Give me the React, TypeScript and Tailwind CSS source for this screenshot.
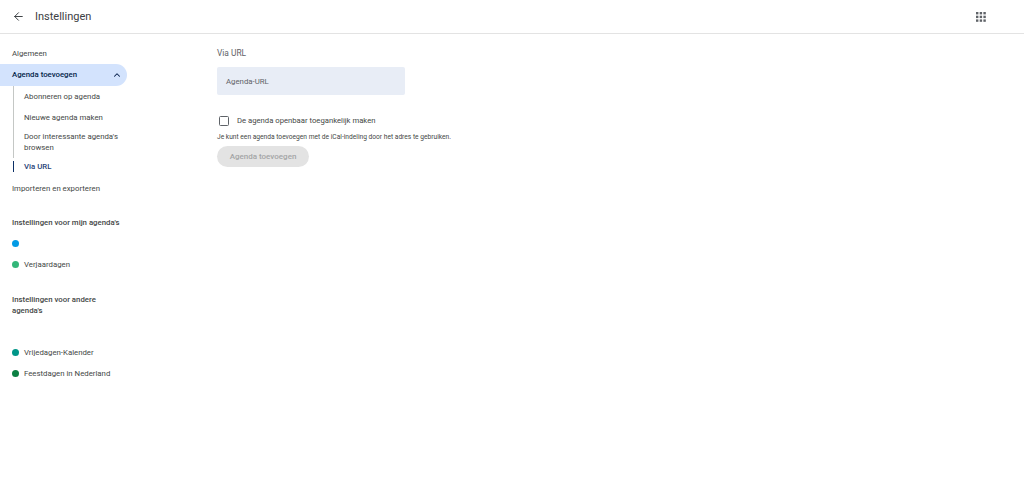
import React from "react";
import { ArrowLeft, ChevronUp } from "lucide-react";

const font = "font-['Roboto',sans-serif]";

const subItems = [
  { label: "Abonneren op agenda", h: "h-[21px] items-center" },
  { label: "Nieuwe agenda maken", h: "h-[21px] items-center" },
  { label: "Door interessante agenda's browsen", h: "h-[30px] items-start pt-[3px]" },
];

const CalendarRow = ({ dot, label }: { dot: string; label?: string }) => (
  <div className="flex h-[21px] items-center pl-3">
    <span className={`h-[7px] w-[7px] rounded-full ${dot}`} />
    <span className="ml-[5px] text-[7.8px] text-[#444746]">{label}</span>
  </div>
);

const Sidebar = () => (
  <aside className="w-[217px] shrink-0 pt-[9px]">
    <div className="flex h-[21px] items-center pl-3 text-[7.8px] text-[#444746]">Algemeen</div>
    <div className="flex h-[22px] w-[127px] items-center justify-between rounded-r-full bg-[#d3e3fd] pl-3 pr-[5px] text-[7.8px] font-medium text-[#041e49]">
      <span>Agenda toevoegen</span>
      <ChevronUp size={10} strokeWidth={2.5} className="text-[#041e49]" />
    </div>
    <div className="ml-[13px] w-[114px]">
      {subItems.map((item) => (
        <div
          key={item.label}
          className={`flex border-l border-[#c4c7c5] pl-[10px] text-[7.8px] leading-[11px] text-[#444746] ${item.h}`}
        >
          <span className="w-[102px]">{item.label}</span>
        </div>
      ))}
      <div className="mt-[3px] flex h-[11px] items-center border-l border-[#0b2f66] pl-[10px] text-[7.8px] font-medium text-[#1f3f77]">
        Via URL
      </div>
    </div>
    <div className="mt-[6px] flex h-[21px] items-center pl-3 text-[7.8px] text-[#444746]">
      Importeren en exporteren
    </div>
    <h2 className="mt-[18px] w-[125px] pl-3 text-[7.8px] font-medium leading-[11px] text-[#444746]">
      Instellingen voor mijn agenda's
    </h2>
    <div className="mt-[5px]">
      <CalendarRow dot="bg-[#039be5]" />
      <CalendarRow dot="bg-[#33b679]" label="Verjaardagen" />
    </div>
    <h2 className="mt-[19px] w-[112px] pl-3 text-[7.8px] font-medium leading-[11px] text-[#444746]">
      Instellingen voor andere agenda's
    </h2>
    <div className="mt-[26px]">
      <CalendarRow dot="bg-[#009688]" label="Vrijedagen-Kalender" />
      <CalendarRow dot="bg-[#0b8043]" label="Feestdagen in Nederland" />
    </div>
  </aside>
);

const AppsIcon = () => (
  <svg width="10" height="10" viewBox="0 0 10 10" fill="#5f6368">
    {[0, 3.7, 7.4].flatMap((y) =>
      [0, 3.7, 7.4].map((x) => <rect key={`${x}-${y}`} x={x} y={y} width="2.4" height="2.4" />)
    )}
  </svg>
);

export default function App() {
  return (
    <div className={`h-[490px] w-[1024px] overflow-hidden bg-white ${font}`}>
      <header className="flex h-[34px] items-center border-b border-[#e3e3e3] pl-[12px] pr-[38px]">
        <ArrowLeft size={13} strokeWidth={1.8} className="text-[#3c4043]" />
        <h1 className="ml-[10px] mt-px text-[11px] text-[#3c4043]">Instellingen</h1>
        <div className="ml-auto">
          <AppsIcon />
        </div>
      </header>
      <div className="flex">
        <Sidebar />
        <main className="pt-[14px]">
          <h2 className="text-[8.4px] leading-[11px] text-[#5f6368]">Via URL</h2>
          <div className="mt-[8px] flex h-[28px] w-[188px] items-center rounded-[2px] bg-[#e8edf6] pl-[9px] pt-px text-[7.8px] text-[#5f6368]">
            Agenda-URL
          </div>
          <label className="mt-[20px] flex h-[11px] items-center">
            <span className="ml-[2px] h-[10px] w-[10px] rounded-[1.5px] border-[1.5px] border-[#5f6368]" />
            <span className="ml-[8px] text-[7.7px] text-[#444746]">De agenda openbaar toegankelijk maken</span>
          </label>
          <p className="mt-[7px] text-[6.65px] leading-[9px] text-[#444746]">
            Je kunt een agenda toevoegen met de iCal-indeling door het adres te gebruiken.
          </p>
          <button
            disabled
            className="mt-[4px] flex h-[21px] w-[92px] items-center justify-center rounded-full bg-[#e3e3e3] text-[8px] font-medium text-[#a4a5a6]"
          >
            Agenda toevoegen
          </button>
        </main>
      </div>
    </div>
  );
}
